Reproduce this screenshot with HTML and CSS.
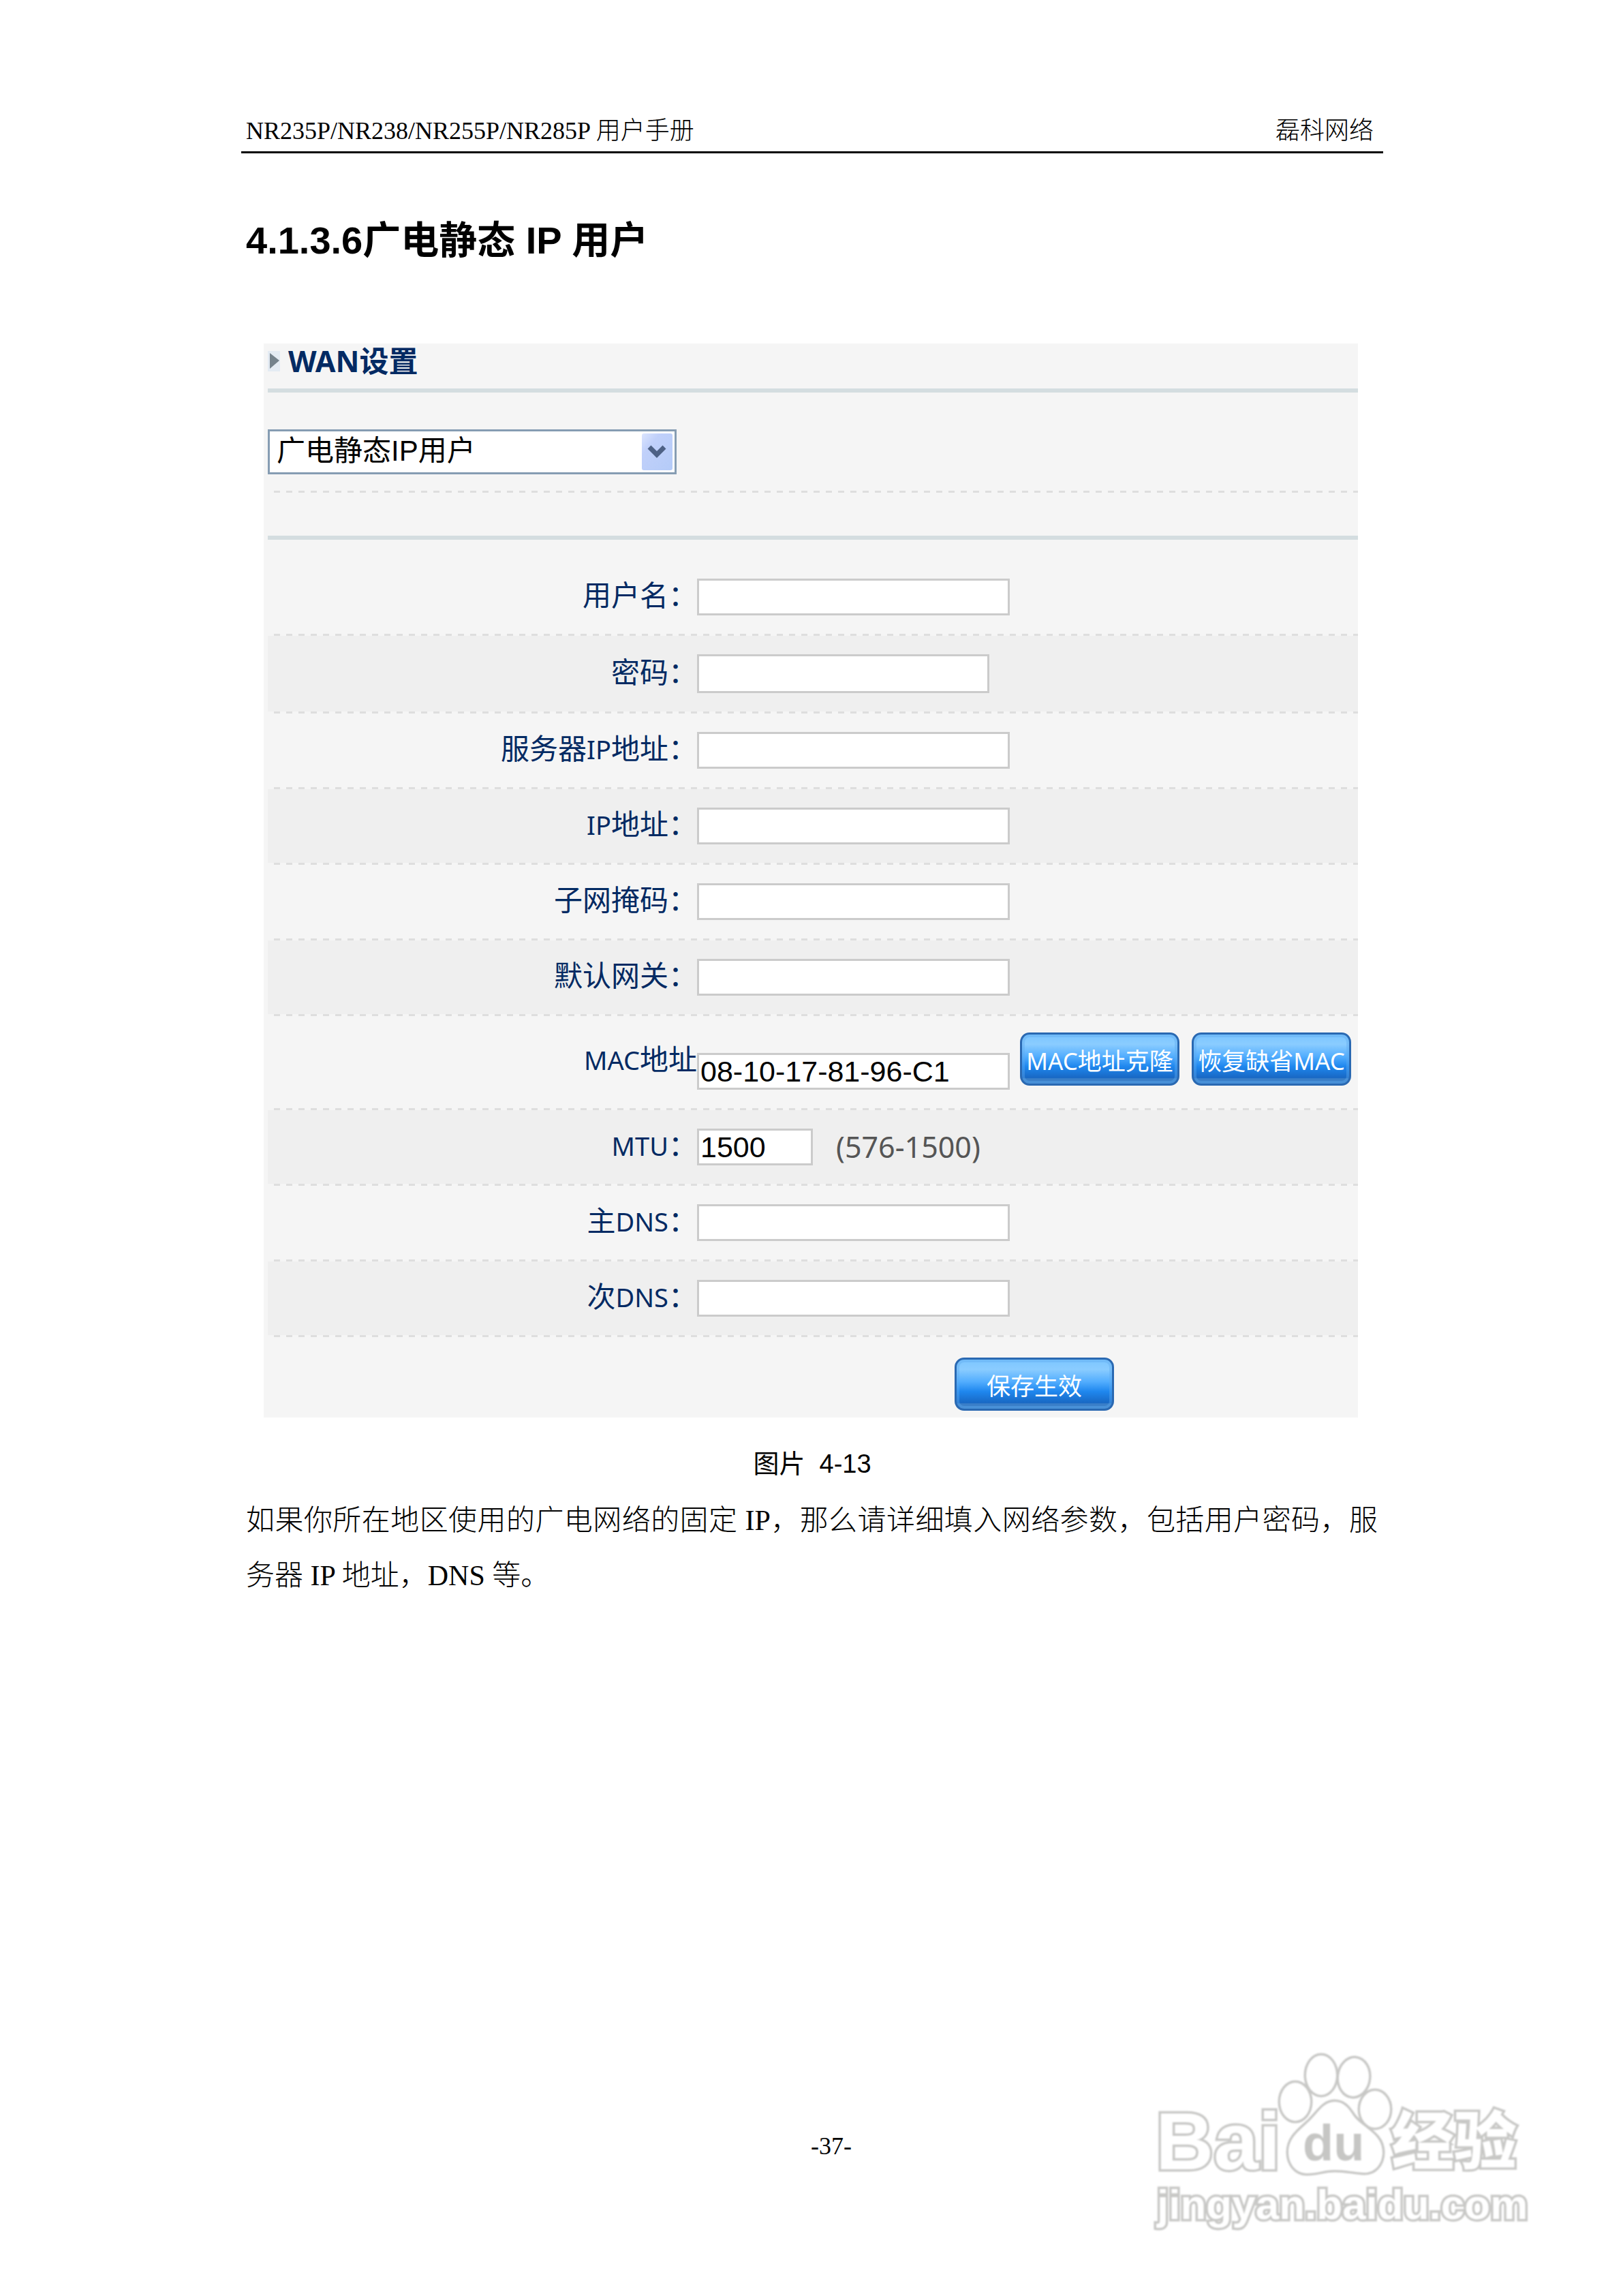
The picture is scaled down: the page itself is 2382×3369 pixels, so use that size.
FILE: index.html
```html
<!DOCTYPE html>
<html lang="zh-CN">
<head>
  <meta charset="UTF-8">
  <title>NR235P/NR238/NR255P/NR285P 用户手册</title>
  <link rel="stylesheet" href="styles.css">
</head>
<body>

  <div class="page">
    <header class="page-header">
      <span>NR235P/NR238/NR255P/NR285P 用户手册</span>
      <span>磊科网络</span>
    </header>

    <h1>4.1.3.6广电静态 IP 用户</h1>

    <form class="panel">
      <h2 class="panel-title">
        <svg class="marker" viewBox="0 0 18 30"><rect width="18" height="30" fill="#e4ebf3"/><path d="M3 3L17 14L3 26Z" fill="#75828c"/></svg>
        WAN设置
      </h2>

      <div class="mode">
        <div class="select-box">
          <select aria-label="WAN设置">
            <option>广电静态IP用户</option>
          </select>
          <svg class="arrow" viewBox="0 0 45 54">
            <defs>
              <linearGradient id="drop" x1="0" y1="0" x2="1" y2="1">
                <stop offset="0" stop-color="#dbe5ff"/>
                <stop offset="0.3" stop-color="#c0d0fa"/>
                <stop offset="1" stop-color="#b4cbf8"/>
              </linearGradient>
            </defs>
            <rect width="45" height="54" rx="3" fill="url(#drop)"/>
            <path d="M11 20L22 31L33 20" fill="none" stroke="#4d6185" stroke-width="7"/>
          </svg>
        </div>
      </div>

      <div class="rows">
        <div class="row">
          <label for="user">用户名&#xFF1A;</label>
          <input type="text" id="user">
        </div>
        <div class="row">
          <label for="pass">密码&#xFF1A;</label>
          <input type="password" id="pass" class="pass">
        </div>
        <div class="row">
          <label for="server">服务器<span class="en">IP</span>地址&#xFF1A;</label>
          <input type="text" id="server">
        </div>
        <div class="row">
          <label for="ip"><span class="en">IP</span>地址&#xFF1A;</label>
          <input type="text" id="ip">
        </div>
        <div class="row">
          <label for="mask">子网掩码&#xFF1A;</label>
          <input type="text" id="mask">
        </div>
        <div class="row">
          <label for="gateway">默认网关&#xFF1A;</label>
          <input type="text" id="gateway">
        </div>
        <div class="row row-mac">
          <label for="mac"><span class="en">MAC</span>地址</label>
          <input type="text" id="mac" value="08-10-17-81-96-C1">
          <div class="mac-buttons">
            <button type="button">MAC地址克隆</button>
            <button type="button">恢复缺省MAC</button>
          </div>
        </div>
        <div class="row">
          <label for="mtu"><span class="en">MTU</span>&#xFF1A;</label>
          <input type="text" id="mtu" class="short" value="1500">
          <span class="hint">(576-1500)</span>
        </div>
        <div class="row">
          <label for="dns1">主<span class="en">DNS</span>&#xFF1A;</label>
          <input type="text" id="dns1">
        </div>
        <div class="row">
          <label for="dns2">次<span class="en">DNS</span>&#xFF1A;</label>
          <input type="text" id="dns2">
        </div>
      </div>

      <div class="actions">
        <button type="button">保存生效</button>
      </div>
    </form>

    <p class="caption">图片&nbsp; 4-13</p>
    <p class="text">如果你所在地区使用的广电网络的固定 IP&#xFF0C;那么请详细填入网络参数&#xFF0C;包括用户密码&#xFF0C;服务器 IP 地址&#xFF0C;DNS 等。</p>

    <footer class="page-footer">-37-</footer>

    <svg class="watermark" viewBox="0 0 620 320">
      <g class="outline">
        <text x="36" y="203" font-size="118">Bai</text>
        <ellipse cx="241" cy="104" rx="22" ry="28"/>
        <ellipse cx="279" cy="65" rx="22" ry="29"/>
        <ellipse cx="327" cy="68" rx="22" ry="28" transform="rotate(6 327 68)"/>
        <ellipse cx="358" cy="115" rx="22" ry="27"/>
        <path d="M299 104C312 104 319 113 326 124C338 142 369 150 369 178C369 197 356 209 341 208C326 207 315 204 299 204C283 204 275 209 258 209C242 209 231 195 231 178C231 157 247 146 262 132C276 118 283 104 299 104Z"/>
        <text x="382" y="195" font-size="92" class="cjk">经验</text>
        <text x="38" y="276" font-size="62">jingyan.baidu.com</text>
      </g>
      <text class="du" x="252" y="190" font-size="74">du</text>
    </svg>
  </div>

</body>
</html>
```
FILE: styles.css
```css
* {
  box-sizing: border-box;
}

body {
  margin: 0;
  background: #fff;
  color: #000;
}

.page {
  position: relative;
  display: flex;
  flex-direction: column;
  min-height: 100vh;
  padding: 170px 352px 198px 354px;
  font-family: "Liberation Serif", "Noto Sans CJK SC", serif;
  font-weight: 300;
}

.page-header {
  display: flex;
  justify-content: space-between;
  padding: 0 14px 8px 7px;
  border-bottom: 3px solid #000;
  font-size: 36px;
  line-height: 44px;
}

h1 {
  margin: 96px 0 119px 7px;
  font: bold 56px/64px "Liberation Sans", "Noto Sans CJK SC", sans-serif;
}

/* router settings panel */
.panel {
  margin: 0 37px 0 33px;
  padding: 0 0 10px 6px;
  background: #f5f5f5;
  font-family: "Noto Sans", "Noto Sans CJK SC", sans-serif;
  font-weight: 400;
}

.panel-title {
  display: flex;
  align-items: center;
  gap: 12px;
  margin: 0;
  padding-bottom: 14px;
  border-bottom: 6px solid #d4dde0;
  color: #032a63;
  font-size: 43px;
  line-height: 52px;
}

.marker {
  width: 18px;
  height: 30px;
}

.mode {
  height: 216px;
  padding-top: 54px;
  border-bottom: 6px solid #d4dde0;
  background: repeating-linear-gradient(to right, #f5f5f5 0 9px, #dedede 9px 18px) 0 144px / 100% 3px no-repeat;
}

.select-box {
  position: relative;
  width: 600px;
}

select {
  display: block;
  width: 100%;
  height: 66px;
  padding: 0 60px 4px 10px;
  border: 3px solid #869db3;
  border-radius: 0;
  background: #fff;
  color: #000;
  font: 42px "Liberation Sans", "Noto Sans CJK SC", sans-serif;
  appearance: none;
}

.arrow {
  position: absolute;
  top: 6px;
  right: 6px;
  width: 45px;
  height: 54px;
  pointer-events: none;
}

.rows {
  padding-top: 30px;
}

.row {
  display: flex;
  align-items: center;
  padding: 27px 0 30px;
  background: repeating-linear-gradient(to right, #f5f5f5 0 9px, #dedede 9px 18px) bottom / 100% 3px no-repeat;
}

.row:nth-child(even) {
  background-color: #efefef;
}

label {
  width: 630px;
  height: 54px;
  color: #032a63;
  font-family: "Noto Sans CJK SC", sans-serif;
  font-size: 42px;
  line-height: 44px;
  text-align: right;
}

.en {
  font-family: "Noto Sans", sans-serif;
  font-size: 38px;
  line-height: 1;
}

input {
  width: 459px;
  height: 54px;
  padding: 0 2px;
  border: 3px solid #cbcbcb;
  border-radius: 0;
  background: #fff;
  color: #000;
  font: 43px "Liberation Sans", sans-serif;
}

.pass {
  width: 429px;
  height: 57px;
}

.short {
  width: 170px;
}

.hint {
  margin-left: 34px;
  color: #555;
  font-size: 43px;
  line-height: 54px;
}

.row-mac {
  align-items: flex-end;
  padding-top: 24px;
}

.row-mac label {
  align-self: center;
}

.mac-buttons {
  display: flex;
  gap: 18px;
  margin-left: 15px;
  padding-bottom: 6px;
}

button {
  width: 234px;
  height: 78px;
  padding: 0;
  border: 3px solid #2a69b2;
  border-radius: 14px;
  background: linear-gradient(#7cc6ff, #8accff 20%, #52adfe 45%, #1f87ee 65%, #1868c4 88%, #3a7fc8 90%);
  box-shadow: inset 0 0 0 4px #5fa9ee66;
  color: #fff;
  font: 35px "Noto Sans", "Noto Sans CJK SC", sans-serif;
  white-space: nowrap;
}

.actions {
  padding: 30px 0 0 1008px;
}

.actions button {
  display: block;
}

.caption {
  margin: 46px 0 0;
  font: 38px/44px "Liberation Sans", "Noto Sans CJK SC", sans-serif;
  text-align: center;
}

.text {
  margin: 21px 8px 0 7px;
  font-size: 42px;
  line-height: 81px;
  text-align: justify;
}

.page-footer {
  margin-top: auto;
  padding-left: 56px;
  font-size: 36px;
  line-height: 44px;
  text-align: center;
}

/* logo lies over the bottom corner of the sheet */
.watermark {
  position: absolute;
  right: 102px;
  bottom: 69px;
  width: 620px;
  height: 320px;
  font-family: "Liberation Sans", sans-serif;
  font-weight: bold;
  filter: blur(1px);
}

.outline {
  fill: #fff;
  stroke: #c8c8c6;
  stroke-width: 7px;
  paint-order: stroke;
}

.cjk {
  font-family: "Noto Sans CJK SC", sans-serif;
  font-weight: 900;
}

.du {
  fill: #c6c6c4;
}
```
